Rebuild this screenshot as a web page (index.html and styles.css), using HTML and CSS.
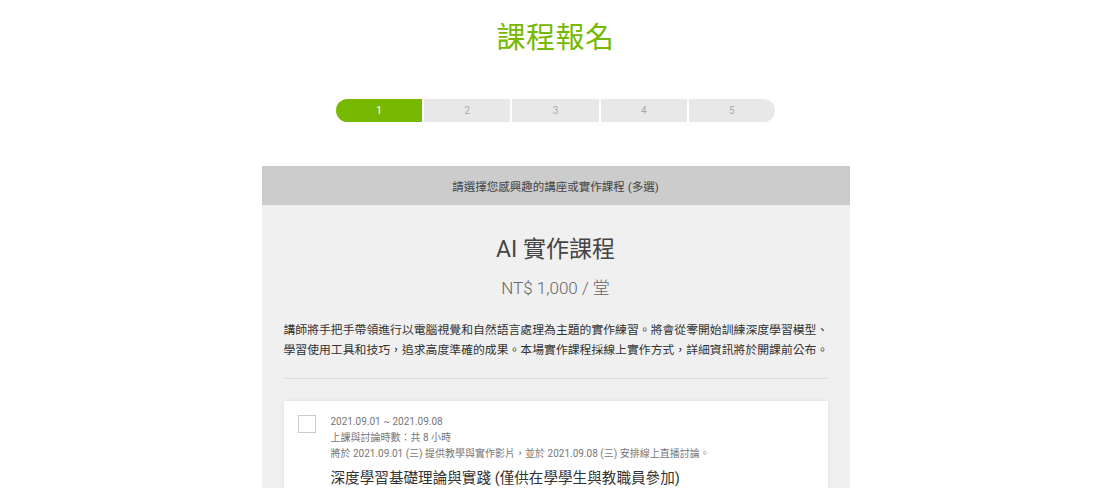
FILE: index.html
```html
<!DOCTYPE html>
<html lang="zh-Hant">
<head>
<meta charset="utf-8">
<title>課程報名</title>
<link rel="stylesheet" href="styles.css">
</head>
<body>
<main class="page">
  <h1 class="page-title">課程報名</h1>
  <ol class="steps">
    <li class="step is-active">1</li>
    <li class="step">2</li>
    <li class="step">3</li>
    <li class="step">4</li>
    <li class="step">5</li>
  </ol>
  <section class="panel">
    <div class="panel-head">請選擇您感興趣的講座或實作課程 (多選)</div>
    <div class="panel-body">
      <h2 class="course-name">AI 實作課程</h2>
      <p class="course-price">NT$ 1,000 / 堂</p>
      <p class="course-desc">講師將手把手帶領進行以電腦視覺和自然語言處理為主題的實作練習。將會從零開始訓練深度學習模型、學習使用工具和技巧，追求高度準確的成果。本場實作課程採線上實作方式，詳細資訊將於開課前公布。</p>
      <hr class="divider">
      <label class="session">
        <span class="checkbox"></span>
        <span class="session-info">
          <span class="meta">2021.09.01 ~ 2021.09.08</span>
          <span class="meta">上課與討論時數：共 8 小時</span>
          <span class="meta">將於 2021.09.01 (三) 提供教學與實作影片，並於 2021.09.08 (三) 安排線上直播討論。</span>
          <span class="session-title">深度學習基礎理論與實踐 (僅供在學學生與教職員參加)</span>
        </span>
      </label>
    </div>
  </section>
</main>
</body>
</html>
```
FILE: styles.css
```css
* { box-sizing: border-box; }
html, body { margin: 0; padding: 0; background: #ffffff; }
body {
  font-family: Roboto, "Noto Sans CJK TC", "Noto Sans", sans-serif;
  color: #333;
}
.page {
  display: flex;
  flex-direction: column;
  align-items: center;
  padding-top: 18px;
  padding-left: 3px;
}
.page-title {
  margin: 0;
  font-size: 29px;
  line-height: 40px;
  font-weight: 400;
  color: #76b900;
  letter-spacing: 0.5px;
}
.steps {
  list-style: none;
  margin: 41px 0 0;
  padding: 0;
  display: flex;
  gap: 2px;
  width: 439px;
  height: 23px;
  border-radius: 12px;
  overflow: hidden;
}
.step {
  flex: 1;
  display: flex;
  align-items: center;
  justify-content: center;
  background: #e8e8e8;
  color: #aaa;
  font-size: 10px;
}
.step.is-active {
  background: #76b900;
  color: #fff;
}
.panel {
  margin-top: 44px;
  width: 588px;
  background: #f0f0f0;
}
.panel-head {
  height: 39px;
  background: #cccccc;
  display: flex;
  align-items: center;
  justify-content: center;
  font-size: 11.5px;
  color: #444;
}
.panel-body {
  padding: 30px 22px 0;
  display: flex;
  flex-direction: column;
}
.course-name {
  margin: 0;
  text-align: center;
  font-size: 23px;
  line-height: 30px;
  font-weight: 400;
  color: #444;
}
.course-price {
  margin: 11px 0 0;
  text-align: center;
  font-size: 17px;
  line-height: 24px;
  font-weight: 300;
  color: #666;
}
.course-desc {
  margin: 19px -12px 0 0;
  font-family: "Noto Sans CJK TC", sans-serif;
  font-size: 11.85px;
  line-height: 20px;
  color: #333;
}
.divider {
  margin: 19px 0 0;
  border: 0;
  height: 1px;
  background: #dddddd;
}
.session {
  margin-top: 22px;
  background: #fff;
  box-shadow: 0 0 4px rgba(0, 0, 0, 0.08);
  display: flex;
  gap: 15px;
  padding: 13px 14px 20px;
}
.checkbox {
  flex: none;
  width: 18px;
  height: 18px;
  margin-top: 1px;
  border: 1px solid #cccccc;
  background: #fff;
}
.session-info {
  display: flex;
  flex-direction: column;
}
.meta {
  font-size: 10px;
  line-height: 16px;
  color: #777;
}
.session-title {
  margin-top: 4px;
  font-size: 14.6px;
  line-height: 24px;
  color: #333;
}
```
